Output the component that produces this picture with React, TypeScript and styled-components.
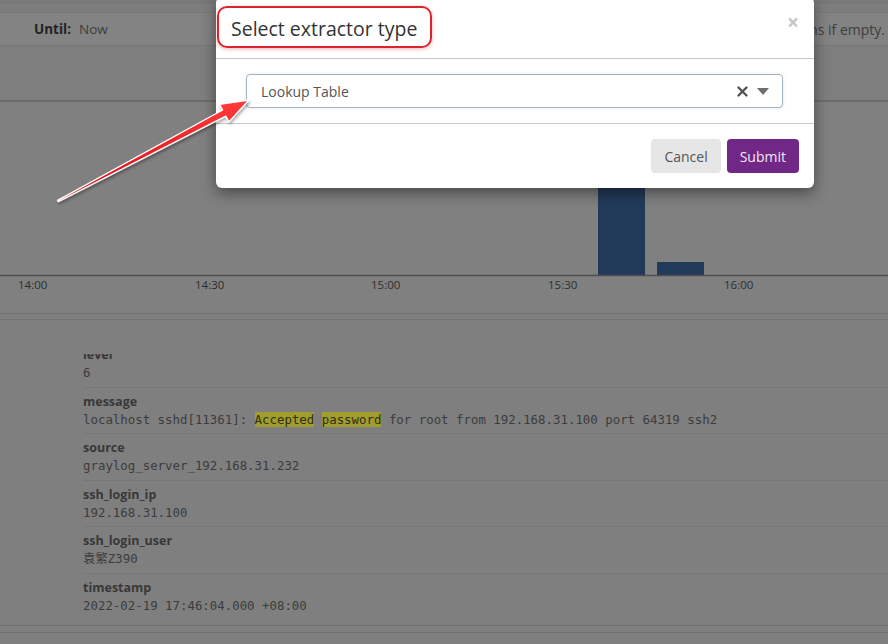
import React from 'react'
import styled, { createGlobalStyle } from 'styled-components'

const GlobalStyle = createGlobalStyle`
  html, body {
    margin: 0;
    padding: 0;
    background: #7f7f7f;
    font-family: 'Open Sans', 'Liberation Sans', sans-serif;
  }
`

const Page = styled.div`
  position: relative;
  width: 888px;
  height: 644px;
  overflow: hidden;
  background: #7f7f7f;
`

const TopArea = styled.div`
  padding-top: 8px;
  height: 100px;
  background: #7e7e7e;
  border-top: 4px solid #787878;
  box-sizing: border-box;
`

const SearchRow = styled.div`
  display: flex;
  align-items: center;
  height: 32px;
  background: #838383;
  border-top: 1px solid #787878;
  border-bottom: 1px solid #767676;
  padding-left: 34px;
  font-size: 13.5px;
  white-space: nowrap;
  overflow: hidden;
`

const UntilLabel = styled.span`
  font-weight: 700;
  color: #232323;
  margin-right: 8px;
`

const UntilValue = styled.span`
  color: #3d3d3d;
`

const StreamHint = styled.span`
  margin-left: auto;
  padding-right: 3px;
  font-size: 14px;
  color: #3e3e3e;
`

const ChartPanel = styled.div`
  border-top: 2px solid #6c6c6c;
  border-bottom: 1px solid #6f6f6f;
  background: #808080;
  height: 211px;
`

const MessagePanel = styled.div`
  margin-top: 5px;
  border-top: 1px solid #747474;
  padding-top: 34px;
`

const FieldViewport = styled.div`
  height: 271px;
  overflow: hidden;
  border-bottom: 1px solid #6e6e6e;
`

const FieldList = styled.dl`
  margin: -13px 0 0 83px;
  padding: 0;
`

const FieldRow = styled.div`
  padding: 5px 0 4.6px;
  border-bottom: 1px solid #767676;
  &:last-child {
    border-bottom: none;
  }
`

const FieldName = styled.dt`
  font-size: 12.5px;
  line-height: 18px;
  font-weight: 700;
  color: #383838;
`

const FieldValue = styled.dd`
  margin: 0;
  font-family: 'DejaVu Sans Mono', 'Liberation Mono', 'Noto Sans CJK SC', monospace;
  font-size: 12.4px;
  line-height: 18px;
  color: #3c3c3c;
  white-space: pre;
`

const Highlight = styled.span`
  background: #a19d2e;
  color: #2f2f16;
`

const BottomRule = styled.div`
  margin-top: 6px;
  border-top: 1px solid #6f6f6f;
`

const Modal = styled.div`
  position: absolute;
  left: 216px;
  top: -3px;
  width: 598px;
  background: #ffffff;
  border-radius: 6px;
  box-shadow: 0 5px 15px rgba(0, 0, 0, 0.45);
  z-index: 10;
`

const ModalHeader = styled.div`
  display: flex;
  align-items: flex-start;
  padding: 9px 15px 10px;
  border-bottom: 1px solid #c8c8c8;
`

const Title = styled.h4`
  margin: 0 0 0 -14px;
  padding: 7px 13px 4px 12px;
  border: 2px solid #d8262e;
  border-radius: 10px;
  box-shadow: 0 1px 4px rgba(216, 38, 46, 0.35);
  font-size: 19.5px;
  line-height: 27px;
  font-weight: 400;
  color: #333333;
`

const CloseButton = styled.button`
  margin: 6px 0 0 auto;
  padding: 0;
  border: 0;
  background: transparent;
  font-family: 'Open Sans', sans-serif;
  font-size: 21px;
  line-height: 21px;
  font-weight: 700;
  color: #c6c6c6;
`

const ModalBody = styled.div`
  padding: 15px 31px 15px 30px;
`

const SelectBox = styled.div`
  display: flex;
  align-items: center;
  height: 34px;
  box-sizing: border-box;
  border: 1px solid #a3b3c3;
  border-radius: 4px;
  box-shadow: 0 0 3px rgba(102, 140, 180, 0.25);
  padding: 0 13px 0 14px;
  font-size: 14px;
  color: #555555;
`

const SelectValue = styled.span`
  flex: 1;
`

const SelectIcons = styled.span`
  display: flex;
  align-items: center;
  gap: 9px;
`

const ModalFooter = styled.div`
  display: flex;
  justify-content: flex-end;
  gap: 6px;
  padding: 15px;
  border-top: 1px solid #c8c8c8;
`

const Button = styled.button<{ primary?: boolean }>`
  height: 34px;
  padding: 0 13px;
  border: 0;
  border-radius: 4px;
  font-family: 'Open Sans', sans-serif;
  font-size: 14px;
  background: ${({ primary }) => (primary ? '#702785' : '#e6e6e6')};
  color: ${({ primary }) => (primary ? '#f3e9f6' : '#555555')};
`

const ArrowLayer = styled.svg`
  position: absolute;
  left: 0;
  top: 0;
  z-index: 20;
  pointer-events: none;
`

const ticks = [
  { x: 18, label: '14:00' },
  { x: 195, label: '14:30' },
  { x: 371, label: '15:00' },
  { x: 548, label: '15:30' },
  { x: 724, label: '16:00' }
]

const bars = [
  { x: 598, top: 40 },
  { x: 657, top: 160 }
]

function Histogram() {
  return (
    <svg width={888} height={211}>
      {bars.map(b => (
        <rect key={b.x} x={b.x} y={b.top} width={47} height={173 - b.top} fill="#223a5a" />
      ))}
      <line x1={0} x2={888} y1={173.5} y2={173.5} stroke="#4e4e4e" strokeWidth={1.5} />
      {ticks.map(t => (
        <text key={t.label} x={t.x} y={187} fontFamily="'Open Sans', sans-serif" fontSize={11.5} fill="#2e2e2e">
          {t.label}
        </text>
      ))}
    </svg>
  )
}

export default function App() {
  return (
    <Page>
      <GlobalStyle />
      <TopArea>
        <SearchRow>
          <UntilLabel>Until:</UntilLabel>
          <UntilValue>Now</UntilValue>
          <StreamHint>Searches in all streams if empty.</StreamHint>
        </SearchRow>
      </TopArea>

      <ChartPanel>
        <Histogram />
      </ChartPanel>

      <MessagePanel>
        <FieldViewport>
          <FieldList>
            <FieldRow>
              <FieldName>level</FieldName>
              <FieldValue>6</FieldValue>
            </FieldRow>
            <FieldRow>
              <FieldName>message</FieldName>
              <FieldValue>
                localhost sshd[11361]: <Highlight>Accepted</Highlight> <Highlight>password</Highlight> for root from
                192.168.31.100 port 64319 ssh2
              </FieldValue>
            </FieldRow>
            <FieldRow>
              <FieldName>source</FieldName>
              <FieldValue>graylog_server_192.168.31.232</FieldValue>
            </FieldRow>
            <FieldRow>
              <FieldName>ssh_login_ip</FieldName>
              <FieldValue>192.168.31.100</FieldValue>
            </FieldRow>
            <FieldRow>
              <FieldName>ssh_login_user</FieldName>
              <FieldValue>袁繁Z390</FieldValue>
            </FieldRow>
            <FieldRow>
              <FieldName>timestamp</FieldName>
              <FieldValue>2022-02-19 17:46:04.000 +08:00</FieldValue>
            </FieldRow>
          </FieldList>
        </FieldViewport>
        <BottomRule />
      </MessagePanel>

      <Modal>
        <ModalHeader>
          <Title>Select extractor type</Title>
          <CloseButton aria-label="Close">×</CloseButton>
        </ModalHeader>
        <ModalBody>
          <SelectBox>
            <SelectValue>Lookup Table</SelectValue>
            <SelectIcons>
              <svg width={11} height={11} viewBox="0 0 11 11">
                <path d="M1.5 1.5 L9.5 9.5 M9.5 1.5 L1.5 9.5" stroke="#505050" strokeWidth={2.3} strokeLinecap="round" />
              </svg>
              <svg width={12} height={7} viewBox="0 0 12 7">
                <path d="M0 0 H12 L6 7 Z" fill="#6f6f6f" />
              </svg>
            </SelectIcons>
          </SelectBox>
        </ModalBody>
        <ModalFooter>
          <Button>Cancel</Button>
          <Button primary>Submit</Button>
        </ModalFooter>
      </Modal>

      <ArrowLayer width={888} height={644}>
        <defs>
          <linearGradient id="arrowFill" x1="0" y1="0" x2="0" y2="1">
            <stop offset="0" stopColor="#ff3b3b" />
            <stop offset="1" stopColor="#d40a10" />
          </linearGradient>
          <filter id="arrowShadow" x="-10%" y="-10%" width="120%" height="130%">
            <feDropShadow dx="1" dy="2" stdDeviation="1.5" floodColor="#000" floodOpacity="0.35" />
          </filter>
        </defs>
        <polygon
          points="57.6,200.3 222.6,110 219.5,104.3 249,100 228.9,121.9 225.8,116.2 58.4,201.7"
          fill="url(#arrowFill)"
          stroke="#ffffff"
          strokeWidth={1.4}
          strokeLinejoin="round"
          filter="url(#arrowShadow)"
        />
      </ArrowLayer>
    </Page>
  )
}
